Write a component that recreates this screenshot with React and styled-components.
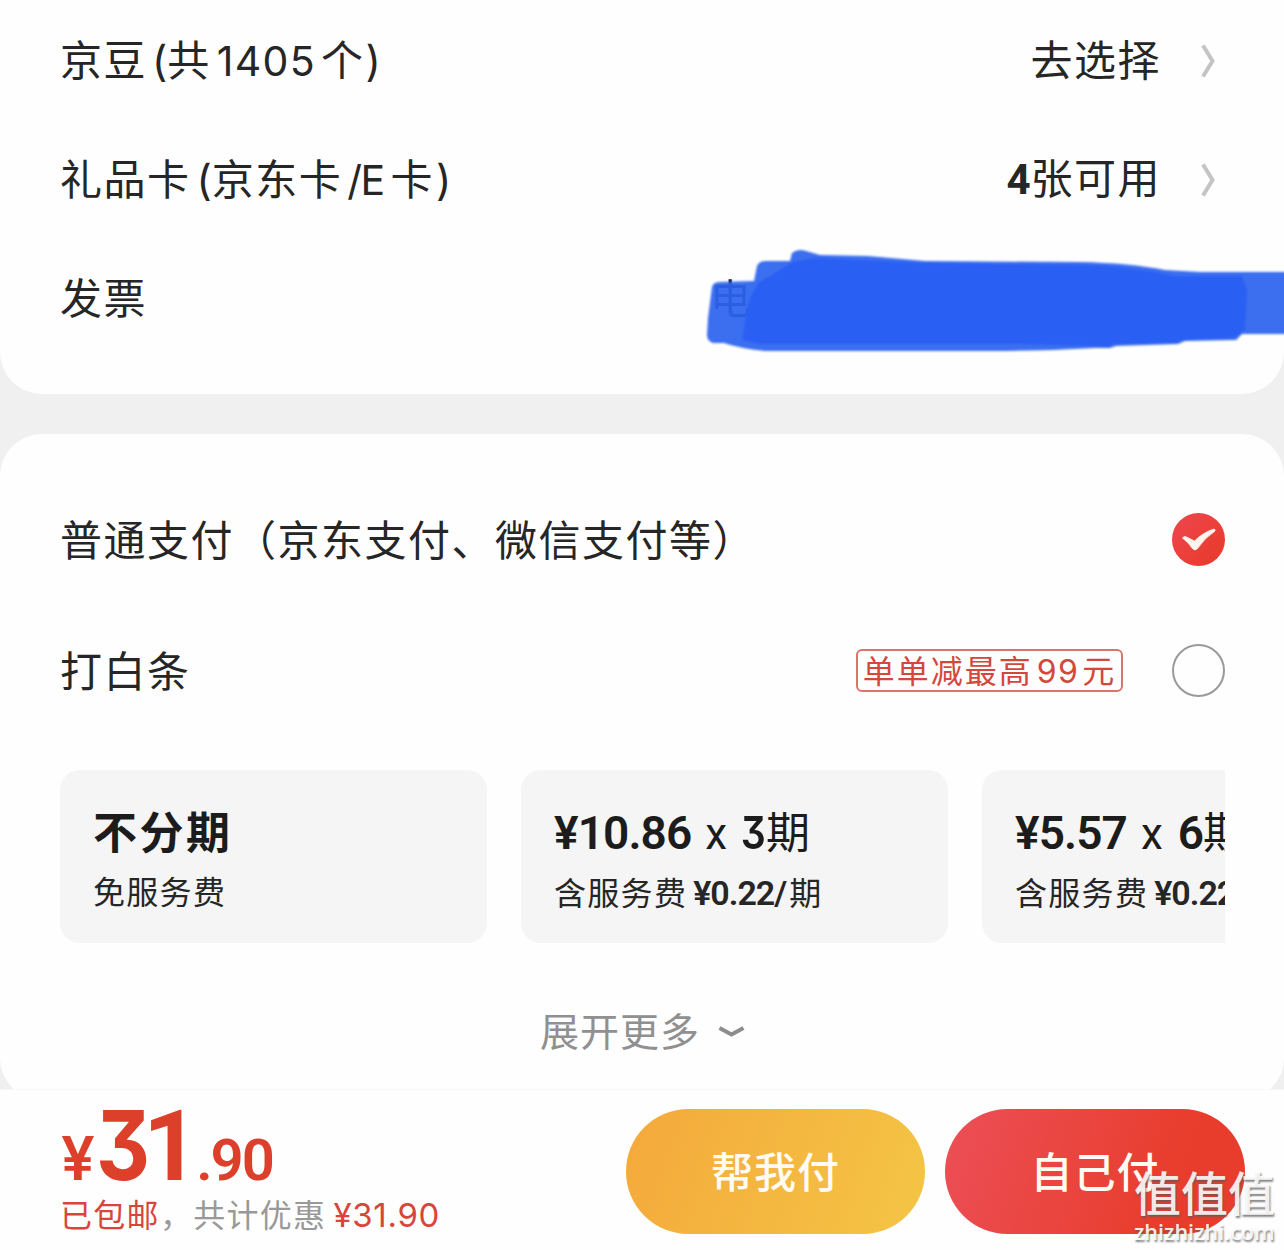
import React from "react";
import styled, { createGlobalStyle } from "styled-components";

const GlobalStyle = createGlobalStyle`
  * {
    box-sizing: border-box;
  }
  body {
    margin: 0;
    background: #f0f0f0;
    font-family: Inter, "Noto Sans CJK SC", sans-serif;
    color: #262626;
  }
`;

const Page = styled.div`
  position: relative;
  width: 1284px;
  height: 1250px;
  overflow: hidden;
  display: flex;
  flex-direction: column;
`;

const AssetCard = styled.section`
  position: relative;
  flex: none;
  height: 394px;
  padding: 1px 68px 0 60px;
  background: #fefefe;
  border-radius: 0 0 42px 42px;
`;

const PayCard = styled.section`
  flex: none;
  height: 666px;
  margin-top: 40px;
  padding: 40px 59px 0 60px;
  background: #fefefe;
  border-radius: 42px;
`;

const Row = styled.div`
  display: flex;
  align-items: center;
  justify-content: space-between;
  height: ${(p) => p.$height || 119}px;
`;

const Side = styled.div`
  display: flex;
  align-items: center;
  gap: ${(p) => p.$gap || 0}px;
`;

const Label = styled.div`
  padding-top: ${(p) => p.$drop || 0}px;
  font-size: 42px;
  line-height: 60px;
  letter-spacing: 1.5px;
  white-space: pre;
`;

const Run = styled.span`
  display: inline-block;
  font-family: ${(p) => p.$font || "inherit"};
  font-size: ${(p) => (p.$size ? `${p.$size}px` : "inherit")};
  font-weight: ${(p) => p.$weight || "inherit"};
  letter-spacing: ${(p) => p.$spacing || 0}px;
  margin-left: ${(p) => p.$left || 0}px;
  margin-right: ${(p) => p.$right || 0}px;
`;

const FlatThree = styled.span`
  display: inline-block;
  font-family: Inter, sans-serif;
  font-feature-settings: "cv09";
  font-size: 0.98em;
  transform: scaleX(0.87);
  margin: 0 ${(p) => p.$right}px 0 ${(p) => p.$left}px;
`;

const Scribble = styled.svg`
  position: absolute;
  left: 700px;
  top: 240px;
`;

const Invoice = styled.div`
  width: 506px;
  font-size: 41px;
  line-height: 60px;
  color: #10204c;
`;

const Tag = styled.span`
  display: flex;
  align-items: center;
  justify-content: center;
  width: 267px;
  height: 43px;
  padding-top: 3px;
  border: 2px solid #dc746c;
  border-radius: 6px;
  color: #d4473c;
  font-size: 32px;
  line-height: 38px;
  letter-spacing: 2px;
`;

const Radio = styled.span`
  width: 53px;
  height: 53px;
  border: 2px solid #999;
  border-radius: 50%;
`;

const Plans = styled.div`
  display: flex;
  gap: 34px;
  width: 1165px;
  margin-top: 34px;
  overflow: hidden;
`;

const Plan = styled.div`
  flex: 0 0 427px;
  height: 173px;
  padding: 31px 33px 0;
  border-radius: 20px;
  background: #f5f5f5;
  white-space: nowrap;
`;

const PlanTitle = styled.div`
  height: 64px;
  font-size: 44px;
  line-height: 64px;
  font-weight: ${(p) => (p.$bold ? 700 : 400)};
  letter-spacing: ${(p) => (p.$bold ? 2.5 : 0)}px;
  color: #1c1c1c;
`;

const PlanFee = styled.div`
  height: 56px;
  font-size: 32px;
  line-height: 56px;
  letter-spacing: 1.3px;
`;

const Expand = styled.div`
  display: flex;
  align-items: center;
  justify-content: center;
  gap: 18px;
  margin-top: 59px;
  color: #909090;
  font-size: 39px;
  line-height: 60px;
  letter-spacing: 1px;
`;

const Footer = styled.footer`
  position: relative;
  display: flex;
  flex: 1;
  margin-top: -11px;
  padding: 19px 0 0 60px;
  border-top: 1px solid #f7f7f7;
  background: #fefefe;
`;

const Totals = styled.div`
  flex: none;
  width: 566px;
`;

const Price = styled.div`
  display: flex;
  align-items: baseline;
  height: 81px;
  line-height: 72px;
  font-family: Roboto, sans-serif;
  color: #dc3f2a;
`;

const Savings = styled.div`
  height: 50px;
  font-size: 32px;
  line-height: 50px;
  letter-spacing: 1.3px;
  color: #999;
  white-space: nowrap;

  em {
    font-style: normal;
    color: #d8463a;
  }
`;

const PayButton = styled.button`
  width: ${(p) => p.$width}px;
  height: 125px;
  margin-right: 20px;
  padding: 2px 0 0;
  flex: none;
  border: 0;
  border-radius: 63px;
  background: ${(p) => p.$fill};
  color: #fffaf2;
  font: 500 42px/123px Inter, "Noto Sans CJK SC", sans-serif;
  letter-spacing: 1px;
`;

const Watermark = styled.div`
  position: absolute;
  left: 1134px;
  top: 1164px;
  width: 150px;
  color: rgba(255, 255, 255, 0.9);
  text-shadow: 1px 2px 2px rgba(90, 90, 90, 0.75);
  white-space: nowrap;
`;

const Mark = styled.div`
  height: 54px;
  font: 500 47px/54px "Noto Sans CJK SC", sans-serif;
`;

const Site = styled.div`
  height: 26px;
  font: 600 21.6px/28px "Open Sans", sans-serif;
`;

const Arrow = () => (
  <svg width="16" height="36" viewBox="0 0 16 36" fill="none">
    <path d="M3 2.5 L12.5 18 L3 33.5" stroke="#c4c4c4" strokeWidth="4" />
  </svg>
);

const Checked = () => (
  <svg width="53" height="53" viewBox="0 0 53 53">
    <defs>
      <linearGradient id="check" x1="0" y1="0" x2="1" y2="1">
        <stop offset="0" stopColor="#ee4650" />
        <stop offset="1" stopColor="#e83a27" />
      </linearGradient>
    </defs>
    <circle cx="26.5" cy="26.5" r="26.5" fill="url(#check)" />
    <path
      d="M10.5 25 Q12 22.5 14.5 24 L22.5 28 Q31 19.5 42 16 Q44 16.5 42.5 18.5 Q33 24.5 25.5 35.5 Q23 38.5 20.5 35.5 Q16.5 29.5 10.5 25Z"
      fill="#fff5f0"
      stroke="#fff5f0"
      strokeWidth="0.8"
    />
  </svg>
);

const plans = [
  { amount: "10.86", count: <FlatThree $left={-3} $right={-1}>3</FlatThree> },
  { amount: "5.57", count: "6" },
];

function App() {
  return (
    <>
      <GlobalStyle />
      <Page>
        <AssetCard>
          <Row>
            <Label>
              京豆
              <Run $left={5}>(</Run>共<Run $left={6} $right={5} $spacing={1.3} $size={41}>1405</Run>个
              <Run $left={1}>)</Run>
            </Label>
            <Side $gap={39}>
              <Label>去选择</Label>
              <Arrow />
            </Side>
          </Row>
          <Row>
            <Label>
              礼品卡
              <Run $left={6}>(</Run>京东卡
              <Run $left={5} $right={7} $spacing={-1.6} $size={41}>/E</Run>卡
              <Run $left={2}>)</Run>
            </Label>
            <Side $gap={39}>
              <Label>
                <Run $font="Roboto" $weight={700}>4</Run>张可用
              </Label>
              <Arrow />
            </Side>
          </Row>
          <Row>
            <Label>发票</Label>
            <Invoice>电</Invoice>
          </Row>
          <Scribble width="584" height="120" viewBox="700 240 584 120">
            <defs>
              <filter id="soft" x="-5%" y="-10%" width="110%" height="120%">
                <feGaussianBlur stdDeviation="1.3" />
              </filter>
            </defs>
            <g filter="url(#soft)">
              <path
                d="M707 335 L708 318 L712 287 Q713 282 720 282 L754 281 L757 266 Q759 261 766 261 L790 261 L792 253 Q798 248 806 251 L820 255 L868 256 L925 261 L1080 262 Q1130 263 1165 270 L1200 272 L1300 272 L1300 334 L1242 334 L1236 340 L1185 341 L1178 344 L1116 346 L1110 348 L1095 348 Q1040 351 990 351 L765 351 Q738 348 724 343 L713 343 Q707 341 707 335Z"
                fill="#2c63ee"
                fillOpacity="0.93"
              />
              <path
                d="M749 300 L758 283 L793 262 L815 258 L925 263 L1080 265 Q1130 266 1175 276 L1242 276 L1247 290 L1245 330 L1234 338 L1183 340 L1176 343 L1114 344 L1108 347 L1097 346 L1020 344 L760 344 L742 340Z"
                fill="#295ff4"
              />
            </g>
          </Scribble>
        </AssetCard>

        <PayCard>
          <Row $height={131}>
            <Label $drop={3}>普通支付（京东支付、微信支付等）</Label>
            <Checked />
          </Row>
          <Row $height={131}>
            <Label $drop={3}>打白条</Label>
            <Side $gap={49}>
              <Tag>
                单单减最高
                <Run $left={4} $right={3} $spacing={1.5}>99</Run>元
              </Tag>
              <Radio />
            </Side>
          </Row>
          <Plans>
            <Plan>
              <PlanTitle $bold>不分期</PlanTitle>
              <PlanFee>免服务费</PlanFee>
            </Plan>
            {plans.map((plan) => (
              <Plan key={plan.amount}>
                <PlanTitle>
                  <Run $font="Roboto" $size={46} $weight={600} $spacing={-0.9}>¥{plan.amount}</Run>
                  <Run $font="Roboto" $left={14} $right={15}>x</Run>
                  <Run $font="Roboto" $size={46} $weight={600} $right={-1}>{plan.count}</Run>
                  期
                </PlanTitle>
                <PlanFee>
                  含服务费
                  <Run $font="Roboto" $size={34} $left={6} $right={3} $weight={600} $spacing={-1}>¥0.22/</Run>期
                </PlanFee>
              </Plan>
            ))}
          </Plans>
          <Expand>
            展开更多
            <svg width="27" height="12" viewBox="0 0 27 12" fill="none">
              <path d="M1.5 2 L13.5 8.5 L25.5 2" stroke="#8c8c8c" strokeWidth="4" />
            </svg>
          </Expand>
        </PayCard>

        <Footer>
          <Totals>
            <Price>
              <Run $font="Inter" $size={60} $weight={600} $spacing={-1} $left={1}>¥</Run>
              <Run $size={98} $weight={700} $spacing={-2}>
                <FlatThree $left={-2} $right={-9}>3</FlatThree>1
              </Run>
              <Run $size={58} $weight={600} $spacing={-2} $left={-1}>.90</Run>
            </Price>
            <Savings>
              <em>已包邮</em>，共计优惠
              <em>
                <Run $left={7} $spacing={0.7} $size={33}>¥31.90</Run>
              </em>
            </Savings>
          </Totals>
          <PayButton $width={299} $fill="linear-gradient(110deg, #f4a93b, #f4c545)">帮我付</PayButton>
          <PayButton $width={300} $fill="linear-gradient(110deg, #ec4f57, #e83d2c 75%)">自己付</PayButton>
        </Footer>

        <Watermark>
          <Mark>值值值</Mark>
          <Site>zhizhizhi.com</Site>
        </Watermark>
      </Page>
    </>
  );
}

export default App;
